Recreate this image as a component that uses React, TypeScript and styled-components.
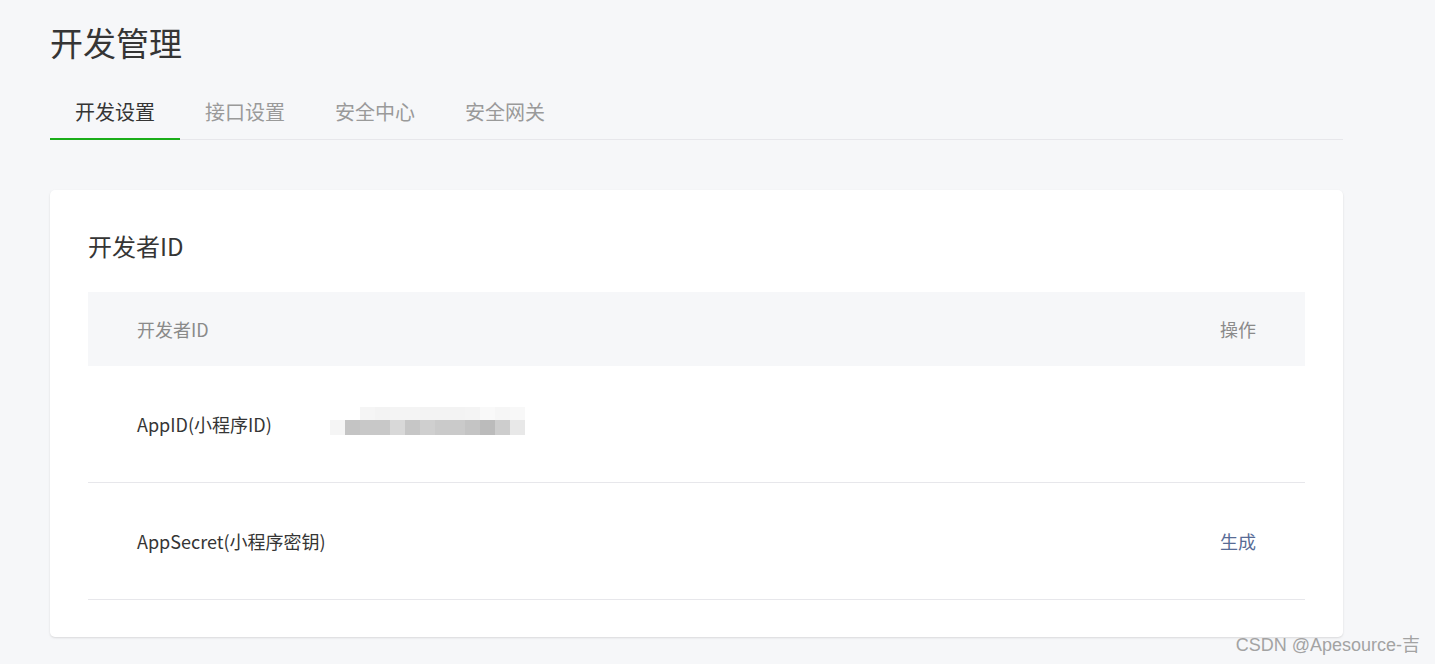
import React from "react";
import styled, { createGlobalStyle } from "styled-components";

const Global = createGlobalStyle`
  html, body { margin: 0; padding: 0; background: #f6f7f9; }
  body { font-family: "Noto Sans CJK SC", "Noto Sans", sans-serif; color: #353535; }
  * { box-sizing: border-box; }
`;

const Page = styled.div`
  position: relative;
  width: 1435px;
  height: 664px;
  overflow: hidden;
  padding: 20px 0 0 50px;
`;

const Main = styled.div`
  width: 1293px;
`;

const Title = styled.h1`
  margin: 0;
  font-size: 33px;
  line-height: 44px;
  font-weight: 400;
  color: #353535;
`;

const TabBar = styled.div`
  display: flex;
  margin-top: 22px;
  border-bottom: 1px solid #e7e7eb;
`;

const Tab = styled.div<{ $active?: boolean }>`
  padding: 0 25px;
  font-size: 20px;
  line-height: 52px;
  color: ${(p) => (p.$active ? "#353535" : "#9a9a9a")};
  border-bottom: 2px solid ${(p) => (p.$active ? "#1aad19" : "transparent")};
  margin-bottom: -1px;
  cursor: pointer;
`;

const Card = styled.div`
  margin-top: 50px;
  background: #fff;
  border-radius: 5px;
  box-shadow: 0 1px 2px rgba(150, 150, 150, 0.3);
  padding: 38px 38px 37px;
`;

const CardTitle = styled.h2`
  margin: 0 0 28px;
  font-size: 24px;
  line-height: 36px;
  font-weight: 400;
  color: #353535;
`;

const HeadRow = styled.div`
  display: flex;
  align-items: center;
  justify-content: space-between;
  height: 74px;
  padding: 0 49px;
  background: #f6f7f9;
  font-size: 18px;
  color: #8a8a8a;
`;

const Row = styled.div`
  display: flex;
  align-items: center;
  height: 117px;
  padding: 0 49px;
  border-bottom: 1px solid #e7e7eb;
  font-size: 18px;
  color: #353535;
`;

const Label = styled.div`
  width: 193px;
  flex: none;
`;

const Value = styled.div`
  flex: 1;
  display: flex;
  align-items: center;
  margin-top: -6px;
`;

const Action = styled.a`
  color: #576b95;
  text-decoration: none;
  cursor: pointer;
`;

const Watermark = styled.div`
  position: absolute;
  right: 15px;
  bottom: 8px;
  font-family: "Liberation Sans", Arial, "Noto Sans CJK SC", sans-serif;
  font-size: 18px;
  color: #a3a3a3;
  line-height: 22px;
`;

const top = [
  null, null, "#f5f5f5", "#f3f3f3", "#f4f4f4", "#f4f4f4", "#f3f3f3", "#f3f3f3", "#f3f3f3", "#f4f4f4", "#f9f9f9", "#f6f6f6", "#f8f8f8",
];
const bottom = [
  "#f5f5f5", "#c4c4c4", "#c8c8c8", "#c8c8c8", "#d8d8d8", "#c6c6c6", "#cfcfcf", "#cacaca", "#cacaca", "#c4c4c4", "#bbbbbb", "#cdcdcd", "#e8e8e8",
];

const Mosaic = () => (
  <svg width={195} height={28} viewBox="0 0 195 28">
    {top.map((c, i) => (c ? <rect key={"t" + i} x={i * 15} y={0} width={15} height={13} fill={c} /> : null))}
    {bottom.map((c, i) => (
      <rect key={"b" + i} x={i * 15} y={13} width={15} height={15} fill={c} />
    ))}
  </svg>
);

export default function App() {
  return (
    <Page>
      <Global />
      <Main>
        <Title>开发管理</Title>
        <TabBar>
          <Tab $active>开发设置</Tab>
          <Tab>接口设置</Tab>
          <Tab>安全中心</Tab>
          <Tab>安全网关</Tab>
        </TabBar>
        <Card>
          <CardTitle>开发者ID</CardTitle>
          <HeadRow>
            <span>开发者ID</span>
            <span>操作</span>
          </HeadRow>
          <Row>
            <Label>AppID(小程序ID)</Label>
            <Value>
              <Mosaic />
            </Value>
          </Row>
          <Row>
            <Label>AppSecret(小程序密钥)</Label>
            <Value />
            <Action>生成</Action>
          </Row>
        </Card>
      </Main>
      <Watermark>CSDN @Apesource-吉</Watermark>
    </Page>
  );
}
